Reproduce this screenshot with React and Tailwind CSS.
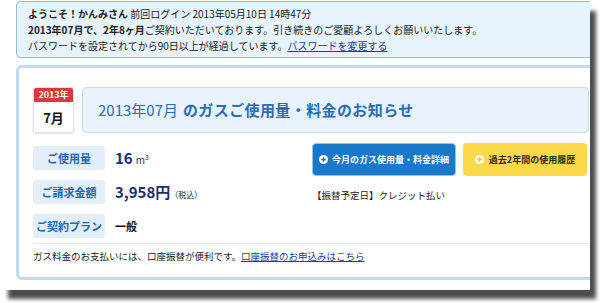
const font = { fontFamily: '"Noto Sans CJK JP", "Liberation Sans", sans-serif' };

function PlusDot({ color }) {
  return (
    <svg width="9" height="9" viewBox="0 0 10 10" className="shrink-0">
      <circle cx="5" cy="5" r="5" fill="#fff" />
      <path d="M5 2.5v5M2.5 5h5" stroke={color} strokeWidth="1.8" />
    </svg>
  );
}

function Row({ label, children }) {
  return (
    <div className="flex items-center h-[24px]">
      <div className="w-[72px] h-[24px] rounded-[3px] bg-[#e2effa] text-[#2367b3] text-[11px] font-bold flex items-center justify-center">
        {label}
      </div>
      <div className="ml-[10px] flex items-baseline">{children}</div>
    </div>
  );
}

export default function App() {
  return (
    <div className="w-[600px] h-[303px] bg-white overflow-hidden" style={font}>
      <div className="w-[590px] h-[290px] bg-white overflow-hidden shadow-[7px_10px_4px_-1px_rgba(0,0,0,0.7)]">
        {/* welcome box */}
        <div className="ml-[16px] mt-[1px] w-[600px] h-[57px] rounded-[4px] border border-[#8fc0de] bg-[#e6f2fc] pl-[11px] pt-[4px] text-[10px] leading-[16px] text-[#222]">
          <div className="whitespace-nowrap">
            <span className="font-bold">ようこそ！かんみさん</span> 前回ログイン 2013年05月10日 14時47分
          </div>
          <div className="whitespace-nowrap">
            <span className="font-bold">2013年07月で、2年8ヶ月</span>ご契約いただいております。引き続きのご愛顧よろしくお願いいたします。
          </div>
          <div className="whitespace-nowrap">
            パスワードを設定されてから90日以上が経過しています。<a className="text-[#1a3aa8] underline">パスワードを変更する</a>
          </div>
        </div>

        {/* main panel */}
        <div className="ml-[16px] mt-[7px] w-[590px] rounded-[6px] border-[3px] border-[#c0dbf0] bg-white px-[14px] pt-[19px] pb-[14px]">
          <div className="flex gap-[8px]">
            <div className="w-[41px] h-[46px] rounded-[3px] border border-[#e2e2e2] bg-white overflow-hidden shadow-[0_1px_2px_rgba(0,0,0,0.12)]">
              <div className="h-[14px] bg-[#d8393b] text-white text-[9px] font-bold leading-[14px] text-center">2013年</div>
              <div className="h-[31px] flex items-center justify-center text-[13px] font-bold text-[#111]">7月</div>
            </div>
            <div className="flex-1 h-[46px] rounded-[4px] border border-[#c6def1] bg-[#e8f3fd] flex items-center pl-[15px] text-[15px] text-[#2a6cb6] whitespace-nowrap">
              <span>2013年07月</span>
              <span className="ml-[5px] font-bold tracking-[0.4px]">のガスご使用量・料金のお知らせ</span>
            </div>
          </div>

          <div className="flex mt-[10px]">
            <div className="w-[279px] pt-[3px] flex flex-col gap-[10px]">
              <Row label="ご使用量">
                <span className="text-[15px] font-bold text-[#1c2d6e]">16</span>
                <span className="ml-[3px] text-[10px] text-[#1c2d6e]">m<sup className="text-[7px]">3</sup></span>
              </Row>
              <Row label="ご請求金額">
                <span className="text-[15px] font-bold text-[#1c2d6e]">3,958円</span>
                <span className="text-[8px] text-[#222]">（税込）</span>
              </Row>
              <Row label="ご契約プラン">
                <span className="text-[11px] font-bold text-[#111]">一般</span>
              </Row>
            </div>
            <div className="flex-1">
              <div className="flex gap-[7px]">
                <div className="w-[144px] h-[33px] rounded-[4px] bg-[#1879ca] border border-[#8cc4ef] flex items-center justify-center gap-[4px] text-white text-[9px] font-bold whitespace-nowrap">
                  <PlusDot color="#1879ca" />
                  今月のガス使用量・料金詳細
                </div>
                <div className="w-[124px] h-[33px] rounded-[4px] bg-[#fcd94b] flex items-center justify-center gap-[5px] text-[#2a2a1a] text-[9px] font-bold whitespace-nowrap">
                  <PlusDot color="#f3c632" />
                  過去2年間の使用履歴
                </div>
              </div>
              <div className="mt-[12px] text-[9.5px] text-[#222] whitespace-nowrap">【振替予定日】クレジット払い</div>
            </div>
          </div>

          <div className="mt-[5px] h-px bg-[#dde9f4]"></div>
          <div className="mt-[5px] text-[9.5px] leading-[14px] text-[#222] whitespace-nowrap">
            ガス料金のお支払いには、口座振替が便利です。<a className="text-[#1a3aa8] underline">口座振替のお申込みはこちら</a>
          </div>
        </div>
      </div>
    </div>
  );
}
